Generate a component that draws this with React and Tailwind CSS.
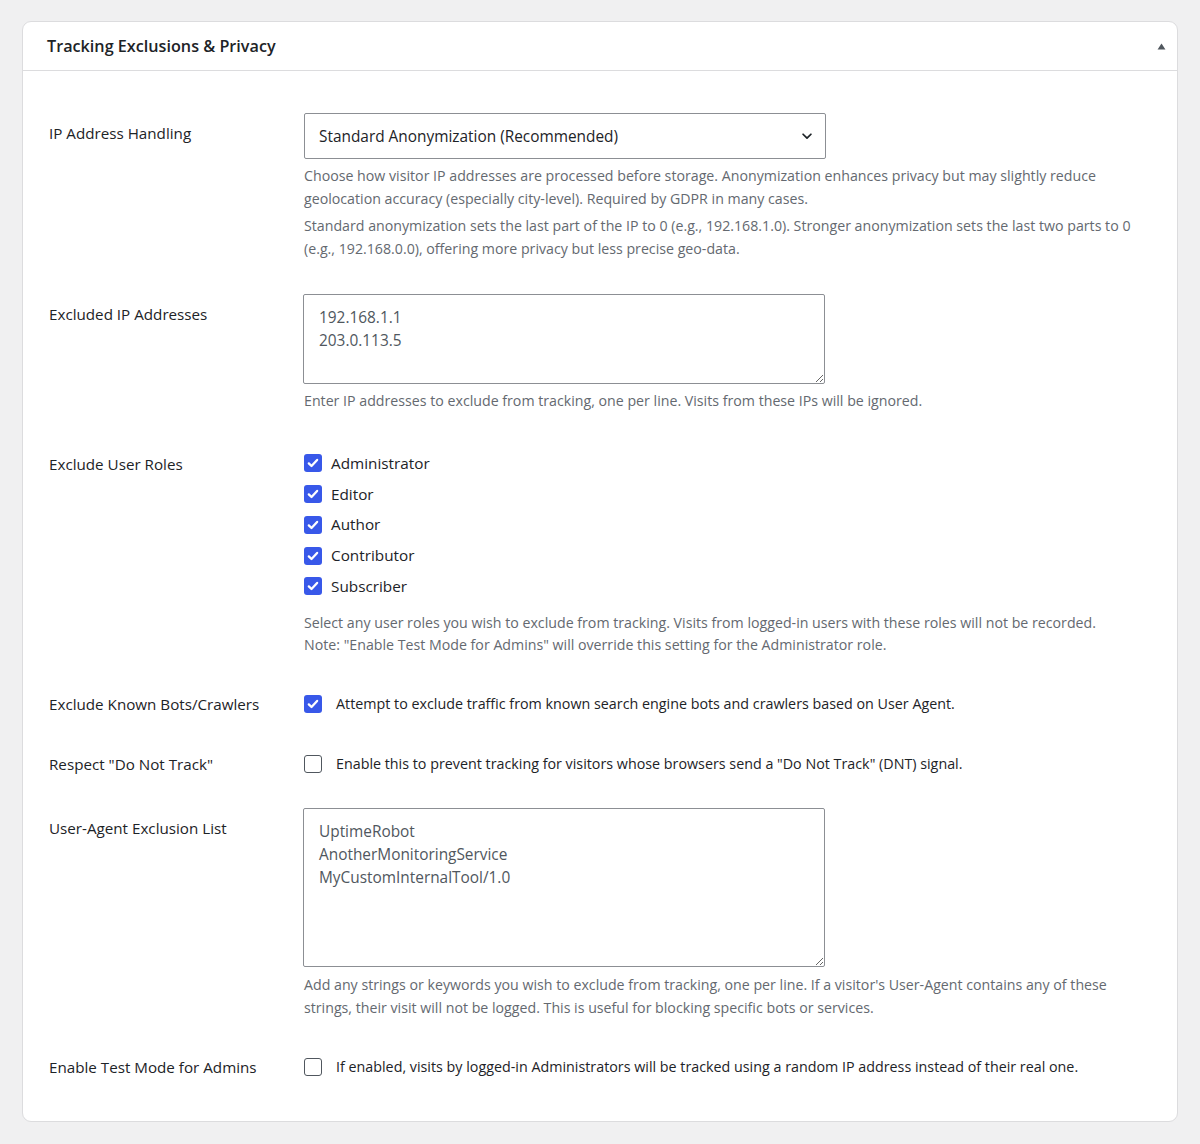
import React from 'react';

const font = { fontFamily: '"Open Sans", "Noto Sans", sans-serif' };

const Check = ({ checked }) =>
    checked ? (
        <span className="flex h-[18px] w-[18px] shrink-0 items-center justify-center rounded-[3px] bg-[#3858e9]">
            <svg viewBox="0 0 16 16" className="h-[14px] w-[14px]" fill="none" stroke="#fff" strokeWidth="2.6" strokeLinecap="round" strokeLinejoin="round">
                <path d="M3.2 8.4l3.1 3.1 6.4-7" />
            </svg>
        </span>
    ) : (
        <span className="block h-[18px] w-[18px] shrink-0 rounded-[3px] border-[1.5px] border-[#50575e] bg-white" />
    );

const Row = ({ label, labelClass = 'pt-[9px]', className = '', children }) => (
    <div className={`grid grid-cols-[255px_522px] ${className}`}>
        <div className={`text-[15.2px] leading-[22px] text-[#1d2327] ${labelClass}`}>{label}</div>
        <div className="w-[850px]">{children}</div>
    </div>
);

const Desc = ({ children, className = '' }) => (
    <p className={`text-[14.2px] text-[#646970] ${className}`}>{children}</p>
);

const TextBox = ({ lines, h }) => (
    <textarea
        readOnly
        defaultValue={lines.join('\n')}
        className={`-ml-px block w-[522px] ${h} resize-y rounded-[2px] border border-[#8c8f94] bg-white px-[15px] pt-[11px] pb-[8px] text-[15.4px] leading-[23px] text-[#50575e] outline-none`}
        style={font}
    />
);

const CheckLine = ({ checked, text }) => (
    <div className="flex h-[22px] items-center gap-[14px]">
        <Check checked={checked} />
        <span className="text-[14.3px] text-[#1d2327]">{text}</span>
    </div>
);

export default function App() {
    const roles = ['Administrator', 'Editor', 'Author', 'Contributor', 'Subscriber'];

    return (
        <div className="min-h-[1144px] bg-[#f0f0f1] px-[22px] pt-[21px] pb-[23px]" style={font}>
            <div className="rounded-[9px] border border-[#dcdcde] bg-white">
                <div className="flex h-[49px] items-center justify-between border-b border-[#dcdcde] pl-[24px] pr-[11px]">
                    <h2 className="text-[16.2px] font-semibold text-[#1d2327]">Tracking Exclusions &amp; Privacy</h2>
                    <svg viewBox="0 0 10 8" className="h-[7px] w-[9px]">
                        <path d="M5 0.5L9.5 7.5H0.5z" fill="#50575e" />
                    </svg>
                </div>

                <div className="pl-[26px] pt-[42px] pb-[43px]">
                    <Row label="IP Address Handling">
                        <div className="relative w-[522px]">
                            <div className="flex h-[46px] items-center rounded-[2px] border border-[#8c8f94] px-[14px] pt-[2px] text-[15.4px] text-[#1d2327]">
                                Standard Anonymization (Recommended)
                            </div>
                            <svg viewBox="0 0 16 16" className="absolute right-[12px] top-[16px] h-[14px] w-[14px]" fill="none" stroke="#1d2327" strokeWidth="2" strokeLinecap="round" strokeLinejoin="round">
                                <path d="M3.5 6l4.5 4.5L12.5 6" />
                            </svg>
                        </div>
                        <Desc className="mt-[5px] leading-[23px]">
                            Choose how visitor IP addresses are processed before storage. Anonymization enhances privacy but may slightly reduce
                            <br />
                            geolocation accuracy (especially city-level). Required by GDPR in many cases.
                        </Desc>
                        <Desc className="mt-[4px] leading-[23px]">
                            Standard anonymization sets the last part of the IP to 0 (e.g., 192.168.1.0). Stronger anonymization sets the last two parts to 0
                            <br />
                            (e.g., 192.168.0.0), offering more privacy but less precise geo-data.
                        </Desc>
                    </Row>

                    <Row label="Excluded IP Addresses" className="mt-[34px]">
                        <TextBox lines={['192.168.1.1', '203.0.113.5']} h="h-[90px]" />
                        <Desc className="mt-[6px] leading-[22px]">
                            Enter IP addresses to exclude from tracking, one per line. Visits from these IPs will be ignored.
                        </Desc>
                    </Row>

                    <Row label="Exclude User Roles" labelClass="pt-[5px]" className="mt-[36px]">
                        <div className="flex flex-col">
                            {roles.map((r) => (
                                <label key={r} className="flex h-[30.75px] items-center gap-[9px]">
                                    <Check checked />
                                    <span className="text-[15.3px] text-[#1d2327]">{r}</span>
                                </label>
                            ))}
                        </div>
                        <Desc className="mt-[10px] leading-[22px]">
                            Select any user roles you wish to exclude from tracking. Visits from logged-in users with these roles will not be recorded.
                            <br />
                            Note: "Enable Test Mode for Admins" will override this setting for the Administrator role.
                        </Desc>
                    </Row>

                    <Row label="Exclude Known Bots/Crawlers" labelClass="" className="mt-[37px]">
                        <CheckLine checked text="Attempt to exclude traffic from known search engine bots and crawlers based on User Agent." />
                    </Row>

                    <Row label={'Respect "Do Not Track"'} labelClass="" className="mt-[38px]">
                        <CheckLine text={'Enable this to prevent tracking for visitors whose browsers send a "Do Not Track" (DNT) signal.'} />
                    </Row>

                    <Row label="User-Agent Exclusion List" className="mt-[33px]">
                        <TextBox lines={['UptimeRobot', 'AnotherMonitoringService', 'MyCustomInternalTool/1.0']} h="h-[159px]" />
                        <Desc className="mt-[6px] leading-[23px]">
                            Add any strings or keywords you wish to exclude from tracking, one per line. If a visitor's User-Agent contains any of these
                            <br />
                            strings, their visit will not be logged. This is useful for blocking specific bots or services.
                        </Desc>
                    </Row>

                    <Row label="Enable Test Mode for Admins" labelClass="" className="mt-[37px]">
                        <CheckLine text="If enabled, visits by logged-in Administrators will be tracked using a random IP address instead of their real one." />
                    </Row>
                </div>
            </div>
        </div>
    );
}
